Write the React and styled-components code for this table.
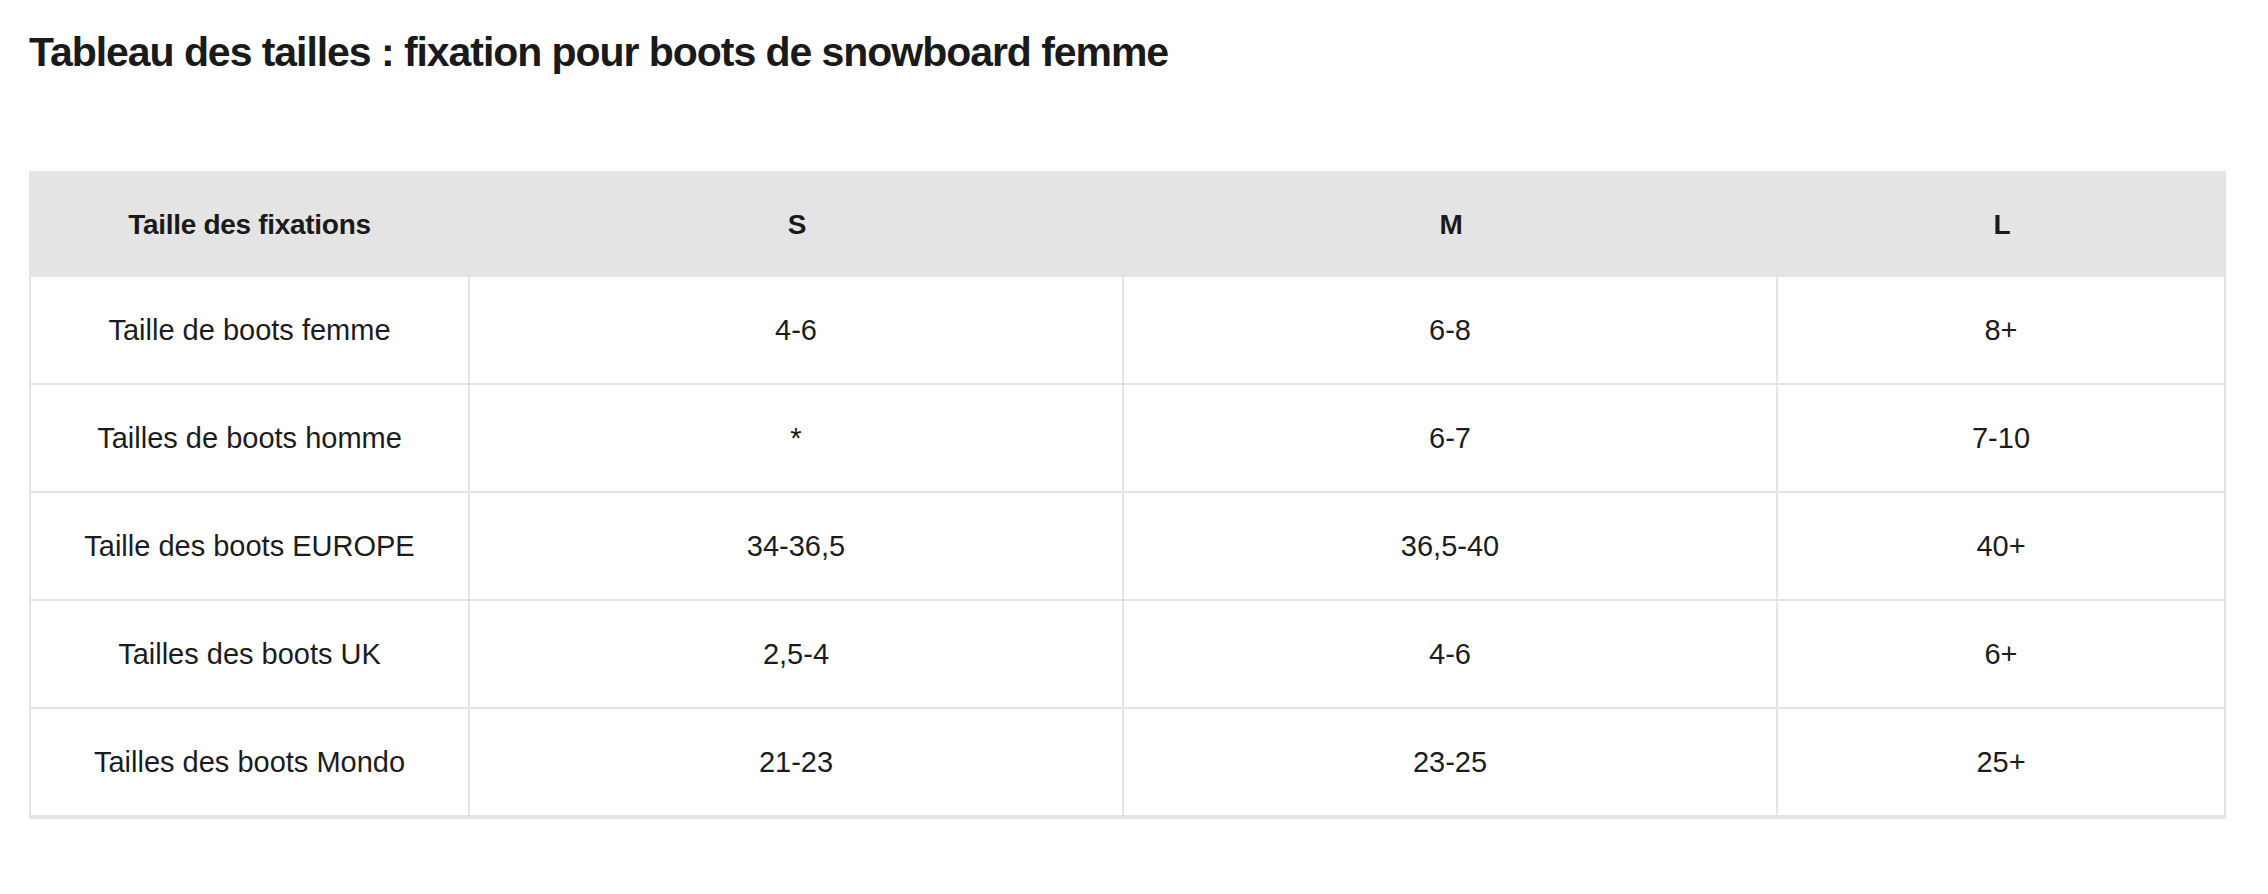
import React from 'react';
import styled, { createGlobalStyle } from 'styled-components';

const GlobalStyle = createGlobalStyle`
  body {
    margin: 0;
    background: #ffffff;
    font-family: "Liberation Sans", Arial, Helvetica, sans-serif;
    color: #1a1a1a;
  }
`;

const Page = styled.div`
  padding: 28px 29px 40px;
`;

const Title = styled.h2`
  margin: 0 0 94px;
  font-size: 41px;
  line-height: 1.2;
  font-weight: 700;
  letter-spacing: -1.05px;
  color: #1a1a1a;
`;

const Table = styled.table`
  width: 2197px;
  table-layout: fixed;
  border-collapse: separate;
  border-spacing: 0;
`;

const HeadCell = styled.th`
  width: ${props => props.$width}px;
  height: 101px;
  padding: 3px 0 0;
  background: #e4e4e4;
  font-size: 28px;
  font-weight: 700;
  letter-spacing: -0.3px;
  text-align: center;
  vertical-align: middle;
  color: #1a1a1a;
`;

const Cell = styled.td`
  height: 106px;
  padding: 0;
  font-size: 29px;
  text-align: center;
  vertical-align: middle;
  color: #1c1c1c;
  border-top: 2px solid #e4e4e4;
  border-right: 2px solid #e4e4e4;
  border-bottom: ${props => (props.$last ? '4px solid #e4e4e4' : 'none')};

  &:first-child {
    border-left: 2px solid #e4e4e4;
  }
`;

const columns = [
  { label: 'Taille des fixations', width: 441 },
  { label: 'S', width: 654 },
  { label: 'M', width: 654 },
  { label: 'L', width: 448 },
];

const rows = [
  ['Taille de boots femme', '4-6', '6-8', '8+'],
  ['Tailles de boots homme', '*', '6-7', '7-10'],
  ['Taille des boots EUROPE', '34-36,5', '36,5-40', '40+'],
  ['Tailles des boots UK', '2,5-4', '4-6', '6+'],
  ['Tailles des boots Mondo', '21-23', '23-25', '25+'],
];

const App = () => {
  return (
    <Page>
      <GlobalStyle />
      <Title>Tableau des tailles : fixation pour boots de snowboard femme</Title>
      <Table>
        <thead>
          <tr>
            {columns.map(col => (
              <HeadCell key={col.label} $width={col.width}>
                {col.label}
              </HeadCell>
            ))}
          </tr>
        </thead>
        <tbody>
          {rows.map((row, i) => (
            <tr key={row[0]}>
              {row.map((value, j) => (
                <Cell key={j} $last={i === rows.length - 1}>
                  {value}
                </Cell>
              ))}
            </tr>
          ))}
        </tbody>
      </Table>
    </Page>
  );
};

export default App;
